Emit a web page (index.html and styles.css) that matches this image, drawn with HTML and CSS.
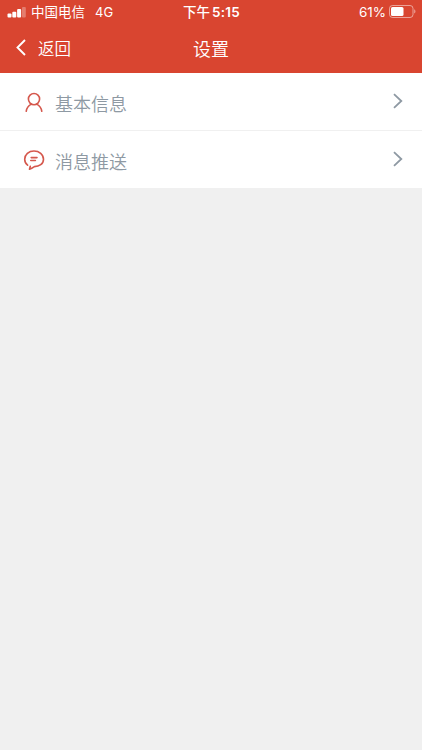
FILE: index.html
```html
<!DOCTYPE html>
<html lang="zh-CN">
<head>
  <meta charset="UTF-8">
  <meta name="viewport" content="width=device-width, initial-scale=1.0">
  <title>设置</title>
  <link rel="stylesheet" href="styles.css">
</head>
<body>
  <header class="header">
    <div class="status-bar">
      <div class="status-left">
        <svg class="signal" width="19" height="11" viewBox="0 0 19 11" fill="#fff">
          <rect x="0.5" y="6.5" width="4" height="4" rx="1"/>
          <rect x="5.3" y="4.8" width="4" height="5.7" rx="1"/>
          <rect x="10.1" y="2" width="4" height="8.5" rx="1"/>
          <rect x="15" y="0" width="3.8" height="10.5" rx="1" opacity="0.3"/>
        </svg>
        <span class="carrier">中国电信</span>
        <span class="network">4G</span>
      </div>
      <div class="status-time"><span>下午</span><span class="clock">5:15</span></div>
      <div class="status-right">
        <span>61%</span>
        <svg class="battery" width="27" height="13" viewBox="0 0 27 13">
          <rect x="0.5" y="0.5" width="23.5" height="12" rx="3" fill="none" stroke="#fff" stroke-opacity="0.5"/>
          <rect x="2" y="2" width="12.5" height="9" rx="1.5" fill="#fff"/>
          <path d="M25.2 4.3a2.4 2.4 0 0 1 0 4.2z" fill="#fff" fill-opacity="0.5"/>
        </svg>
      </div>
    </div>

    <nav class="nav-bar">
      <a class="back" href="#">
        <svg width="10" height="17" viewBox="0 0 10 17" fill="none" stroke="#fff" stroke-width="1.9">
          <path d="M9 1L1.5 8.5L9 16"/>
        </svg>
        <span>返回</span>
      </a>
      <h1 class="title">设置</h1>
    </nav>
  </header>

  <main class="menu">
    <a class="menu-item" href="#">
      <svg class="menu-icon" width="22" height="22" viewBox="0 0 22 22" fill="none" stroke="#d5584d" stroke-width="1.6" stroke-linecap="round">
        <circle cx="11" cy="8.1" r="5.6"/>
        <path d="M3.2 20.3C3.7 16.9 5.4 14.6 8.2 13.1M13.8 13.1C16.6 14.6 18.3 16.9 18.8 20.3"/>
      </svg>
      <span class="menu-label">基本信息</span>
      <svg class="arrow" width="10" height="16" viewBox="0 0 10 16" fill="none" stroke="#8e99a3" stroke-width="1.8">
        <path d="M1 1.2L8.3 8L1 14.8"/>
      </svg>
    </a>
    <a class="menu-item" href="#">
      <svg class="menu-icon" width="22" height="22" viewBox="0 0 22 22" fill="none" stroke="#d5584d" stroke-width="1.6" stroke-linecap="round" stroke-linejoin="round">
        <path d="M4.6 16.2C2.6 14.7 1.7 12.5 1.7 10.2C1.7 5.4 5.8 2 11 2S20.5 5.4 20.5 10.2S16.2 17.6 11.4 17.6C9.8 18.7 8.1 19.7 6.5 20.2L7.3 17.2"/>
        <path d="M8.2 8.6H14M7.8 11.5H12.4"/>
      </svg>
      <span class="menu-label">消息推送</span>
      <svg class="arrow" width="10" height="16" viewBox="0 0 10 16" fill="none" stroke="#8e99a3" stroke-width="1.8">
        <path d="M1 1.2L8.3 8L1 14.8"/>
      </svg>
    </a>
  </main>
</body>
</html>
```
FILE: styles.css
```css
* {
  box-sizing: border-box;
}

body {
  margin: 0;
  min-height: 100vh;
  background-color: #f0f0f0;
  font-family: Inter, "Noto Sans CJK SC", sans-serif;
}

a {
  color: inherit;
  text-decoration: none;
}

svg {
  display: block;
  flex-shrink: 0;
}

.header {
  height: 73px;
  background-color: #d94530;
  color: #fff;
}

.status-bar {
  display: grid;
  grid-template-columns: 1fr auto 1fr;
  align-items: center;
  height: 23px;
  padding: 1px 6px 0 7px;
  font-size: 13.5px;
  line-height: 22px;
}

.status-left,
.status-right,
.status-time {
  display: flex;
  align-items: center;
}

.carrier {
  margin-left: 5px;
}

.network {
  margin-left: 10px;
  font-size: 13px;
}

.status-time {
  gap: 2px;
  font-size: 13.5px;
  font-weight: 500;
}

.clock {
  font-weight: 600;
  letter-spacing: 0.2px;
}

.status-right {
  justify-content: flex-end;
  gap: 3px;
}

.battery {
  margin-top: -1px;
}

.nav-bar {
  display: grid;
  grid-template-columns: 1fr auto 1fr;
  align-items: center;
  height: 50px;
  padding: 0 16px 1px;
}

.back {
  display: flex;
  align-items: center;
  gap: 12px;
  font-size: 16.5px;
  font-weight: 350;
}

.title {
  margin: 0;
  font-size: 18px;
  font-weight: 350;
}

.menu {
  background-color: #fff;
}

.menu-item {
  display: flex;
  align-items: center;
  height: 58px;
  padding: 0 19px 1px 23px;
  color: #8e99a3;
}

.menu-item:first-child {
  height: 57px;
}

.menu-item + .menu-item {
  border-top: 1px solid #f0f0f0;
}

.menu-icon {
  margin-top: 1px;
}

.menu-label {
  flex: 1;
  margin-left: 10px;
  padding-top: 4px;
  font-size: 18px;
  font-weight: 350;
}
```
